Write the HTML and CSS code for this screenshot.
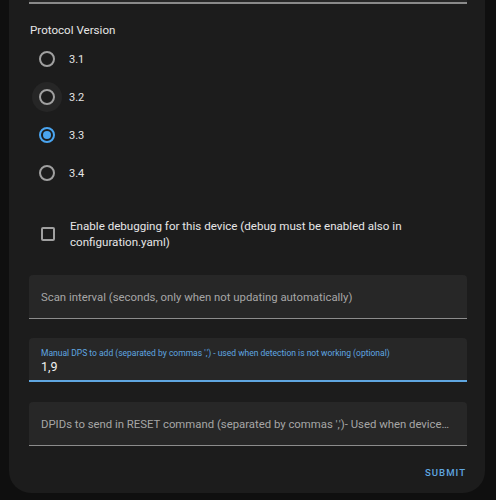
FILE: index.html
```html
<!DOCTYPE html>
<html>
<head>
<meta charset="utf-8">
<link rel="stylesheet" href="styles.css">
</head>
<body>
<div class="dialog">
  <div class="content">
    <div class="field stub"></div>
    <div class="group-label">Protocol Version</div>
    <div class="radios">
      <div class="radio-row"><span class="radio"></span><span class="radio-label">3.1</span></div>
      <div class="radio-row"><span class="radio hovered"></span><span class="radio-label">3.2</span></div>
      <div class="radio-row"><span class="radio checked"></span><span class="radio-label">3.3</span></div>
      <div class="radio-row"><span class="radio"></span><span class="radio-label">3.4</span></div>
    </div>
    <div class="check-row">
      <span class="checkbox"></span>
      <span class="check-label">Enable debugging for this device (debug must be enabled also in configuration.yaml)</span>
    </div>
    <div class="field scan">
      <span class="placeholder">Scan interval (seconds, only when not updating automatically)</span>
    </div>
    <div class="field focused">
      <span class="float-label">Manual DPS to add (separated by commas ',') - used when detection is not working (optional)</span>
      <span class="value">1,9</span>
    </div>
    <div class="field dpids">
      <span class="placeholder">DPIDs to send in RESET command (separated by commas ',')- Used when device is unavailable</span>
    </div>
  </div>
  <div class="actions">
    <button class="submit">SUBMIT</button>
  </div>
</div>
</body>
</html>
```
FILE: styles.css
```css
html, body {
  margin: 0;
  padding: 0;
  background: #0f0f0f;
  font-family: Roboto, "Noto Sans", sans-serif;
}
.dialog {
  margin-left: 9px;
  width: 476px;
  height: 493px;
  background: #1c1c1c;
  border-radius: 0 0 22px 22px;
  display: flex;
  flex-direction: column;
}
.content {
  padding: 0 18px 0 20px;
  display: flex;
  flex-direction: column;
}
.field {
  box-sizing: border-box;
  height: 44px;
  background: #272727;
  border-bottom: 1px solid #8c8c8c;
  border-radius: 4px 4px 0 0;
  padding: 0 12px;
  display: flex;
  flex-direction: column;
  justify-content: center;
}
.field.stub {
  height: 4px;
  border-radius: 0;
  border-bottom: 2px solid #8a8a8a;
}
.field.scan {
  margin-top: 25px;
}
.field.focused {
  margin-top: 19px;
  border-bottom: 2px solid #5fa6e0;
  justify-content: flex-start;
  padding-top: 9px;
}
.field.dpids {
  margin-top: 20px;
  padding-right: 16px;
}
.placeholder {
  color: #a6a6a6;
  font-size: 11.35px;
  white-space: nowrap;
  overflow: hidden;
  text-overflow: ellipsis;
}
.float-label {
  color: #5fa6e0;
  font-size: 8.5px;
  line-height: 12px;
  white-space: nowrap;
  overflow: hidden;
}
.value {
  color: #f0f0f0;
  font-size: 12.5px;
  line-height: 16px;
}
.group-label {
  color: #e6e6e6;
  font-size: 11.6px;
  line-height: 16px;
  margin-top: 18px;
  margin-left: 1px;
}
.radios {
  display: flex;
  flex-direction: column;
  margin-top: 2px;
}
.radio-row {
  display: flex;
  align-items: center;
  height: 38px;
}
.radio {
  position: relative;
  box-sizing: border-box;
  width: 16px;
  height: 16px;
  border-radius: 50%;
  border: 2px solid #a0a0a0;
  margin-left: 10px;
  flex: none;
}
.radio.hovered {
  box-shadow: 0 0 0 7px #262626;
}
.radio.checked {
  border-color: #4aa5f0;
}
.radio.checked::after {
  content: "";
  position: absolute;
  left: 2px;
  top: 2px;
  width: 8px;
  height: 8px;
  border-radius: 50%;
  background: #4aa5f0;
}
.radio-label {
  color: #e6e6e6;
  font-size: 11px;
  margin-left: 14px;
}
.check-row {
  display: flex;
  align-items: center;
  margin-top: 26px;
}
.checkbox {
  box-sizing: border-box;
  width: 14px;
  height: 14px;
  border: 2px solid #a0a0a0;
  border-radius: 2px;
  margin-left: 12px;
  flex: none;
}
.check-label {
  color: #e6e6e6;
  font-size: 11.6px;
  line-height: 16px;
  margin-left: 15px;
  width: 360px;
}
.actions {
  display: flex;
  justify-content: flex-end;
  padding: 21px 19px 0 0;
}
.submit {
  background: none;
  border: none;
  padding: 0;
  color: #5fa6e0;
  font-family: Roboto, sans-serif;
  font-weight: 500;
  font-size: 9.6px;
  line-height: 12px;
  letter-spacing: 1px;
}
```
